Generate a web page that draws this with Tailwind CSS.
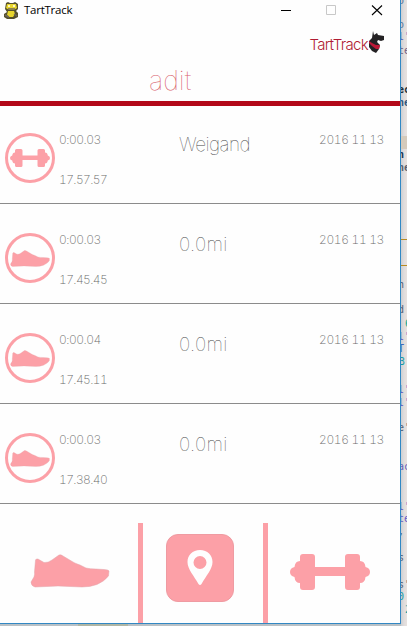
<!DOCTYPE html>
<html lang="en">
<head>
<meta charset="utf-8">
<title>TartTrack</title>
<script src="https://cdn.jsdelivr.net/npm/@tailwindcss/browser@4"></script>
</head>
<body class="relative h-[626px] w-[407px] overflow-hidden bg-[#e2dedd]">
<svg width="0" height="0" class="absolute">
  <defs>
    <symbol id="shoe" viewBox="0 0 80 34">
      <path d="M5.500 6Q6 4.500 8 5L14 8.500Q18 9 22 6L29 1Q31 .3 33 2L43 8Q45 9 46 9.500L50 11L56 14Q60 15 66 15L74 15.500Q78 15.500 79 17L78.500 22Q74 27.500 67 30.500Q60 33 52 33L28 32L5 33Q1 32 1 28L4 23Q5 20 4.500 18Z" fill="#fca0a7" stroke="#e3a5ab" stroke-width=".5"/>
    </symbol>
    <symbol id="dumbbell" viewBox="0 0 80 36">
      <path d="M13 0H22Q25 0 25 3V13H55V3Q55 0 58 0H67Q70 0 70 3V7Q75 7 75.500 13Q80 14 80 18Q80 22 75.500 23Q75 29 70 29V33Q70 36 67 36H58Q55 36 55 33V22H25V33Q25 36 22 36H13Q10 36 10 33V29Q5 29 4.500 23Q0 22 0 18Q0 14 4.500 13Q5 7 10 7V3Q10 0 13 0Z" fill="#fca0a7"/>
    </symbol>
  </defs>
</svg>

<!-- Editor window behind the app -->
<div class="absolute left-[401px] top-0 h-[626px] w-[6px] overflow-hidden bg-linear-to-r from-[#cdcfd2] via-[#e0dcdc] to-[#e8e2df] font-['DejaVu_Sans_Mono',monospace] text-[10px] leading-[12px] text-[#546076]">
  <div class="absolute top-[136px] h-[13px] w-full bg-[#d5cabb]"></div>
  <div class="absolute top-[239px] h-px w-full bg-[#b98a20]"></div>
  <div class="absolute top-[265px] h-px w-full bg-[#b98a20]"></div>
  <span class="absolute -left-[3px] -top-[5px] text-[#5576a0]">o</span>
  <span class="absolute -left-[3px] top-[19px] text-[#5576a0]">o</span>
  <span class="absolute -left-[3px] top-[31px] text-[#5260c0]">l'</span>
  <span class="absolute -left-[3px] top-[45px] text-[#715c80]">te</span>
  <span class="absolute -left-[3px] top-[84px] font-bold text-[#253038]">ec</span>
  <span class="absolute -left-[3px] top-[97px] font-bold text-[#315780]">ne</span>
  <span class="absolute -left-[3px] top-[149px] font-bold text-[#173657]">n</span>
  <span class="absolute -left-[3px] top-[162px] font-bold text-[#596070]">ne</span>
  <span class="absolute -left-[3px] top-[279px]">h</span>
  <span class="absolute -left-[3px] top-[304px]">d</span>
  <span class="absolute left-[4px] top-[318px] text-[#15a78d]">6</span>
  <span class="absolute -left-[3px] top-[331px] text-[#6259c5]">l'</span>
  <span class="absolute -left-[3px] top-[343px] text-[#4168bd]">T</span>
  <span class="absolute -left-[2px] top-[356px] text-[#169ca5]">3</span>
  <span class="absolute -left-[3px] top-[384px] text-[#6259c5]">l'</span>
  <span class="absolute -left-[3px] top-[397px] text-[#6259c5]">l'</span>
  <span class="absolute -left-[3px] top-[422px]">e'</span>
  <span class="absolute -left-[3px] top-[461px] text-[#665fba]">ac</span>
  <span class="absolute -left-[3px] top-[501px] text-[#6259c5]">l'</span>
  <span class="absolute -left-[3px] top-[513px] text-[#6259c5]">te</span>
  <span class="absolute -left-[3px] top-[526px]">,</span>
  <span class="absolute -left-[3px] top-[552px]">s</span>
  <span class="absolute -left-[3px] top-[579px]">s'</span>
  <span class="absolute -left-[3px] top-[591px] text-[#169ca5]">0</span>
  <span class="absolute left-[4px] top-[604px] text-[#169ca5]">2</span>
</div>
<div class="absolute left-0 top-[624px] flex h-[2px] w-[401px] bg-[#b9c1c6]">
  <div class="ml-[78px] h-full w-[50px] bg-[#b0b6a4]"></div>
</div>

<!-- App window -->
<main class="relative flex h-[624px] w-[401px] flex-col border-b border-r border-[#3288c4] bg-[#fefefe] font-[Inter,sans-serif] font-extralight text-[#6c6c6c]">
  <div class="flex h-5 shrink-0 items-center pl-[4px] text-black">
    <svg width="15" height="18" viewBox="0 0 15 18" class="shrink-0">
      <path d="M2 2L4 1L6 2H9L11 1L14 3L14 8L12 10L14 12V16L10 18H3L0 16V13L3 11L1 8Z" fill="#55502d"/>
      <path d="M3 3L6 3H9L12 3L13 7L10 9H5L2 7ZM4 10H10L11 13L9 16H5L3 14Z" fill="#e8d62d"/>
      <path d="M4 4H6V6H4ZM9 4H11V6H9Z" fill="#fff7bd"/>
      <path d="M4 8H11M1 14L5 16M10 13L13 15" stroke="#6f685a" stroke-width="1.500"/>
    </svg>
    <span class="ml-[5px] font-['Open_Sans',sans-serif] text-[11.500px] font-normal leading-5 tracking-[-0.25px]">TartTrack</span>
    <svg width="106" height="20" viewBox="0 0 106 20" class="ml-auto mr-[15px] shrink-0" fill="none">
      <path d="M2 10.500H12" stroke="#000"/>
      <path d="M47.500 5.500H56.500V14.500H47.500Z" stroke="#c8c8c8"/>
      <path d="M93 5.500L103 15M103 5.500L93 15" stroke="#000" stroke-width="1.100"/>
    </svg>
  </div>
  <header class="h-[81px] shrink-0">
    <div class="flex h-[38px] items-start justify-end pr-[15px] pt-[11px]">
      <span class="mt-[4px] text-[15px] font-light leading-[20px] tracking-[-0.7px] text-[#b01c34]">TartTrack</span>
      <svg width="16" height="23" viewBox="0 0 16 23" class="ml-px">
        <path d="M4 0L5 4L8 2L9 4L15 5V9L12 10L9 9L8 11L11 14L10 18L7 22L3 20L0 16V10L3 7Z" fill="#242224"/>
        <path d="M0 10L3 12L7 14L11 14L10 18L7 18L3 15L0 12Z" fill="#bd1937"/>
      </svg>
    </div>
    <h1 class="ml-[149px] text-[27px] font-thin leading-[45px] text-[#d9606c]">adit</h1>
  </header>
  <div class="h-[5px] shrink-0 bg-[#b30819]"></div>

  <section class="-mt-[2px] shrink-0">
    <article class="flex h-[100px] border-b border-[#8b8b8b] pl-[5px] pr-4">
      <div class="mt-[29px] flex size-[50px] shrink-0 items-center justify-center rounded-full border-[3px] border-[#fca0a7]"><svg width="40" height="18"><use href="#dumbbell"/></svg></div>
      <div class="ml-[4px] w-[120px] pt-[26px] text-[12px] leading-[20px] tabular-nums"><p class="tracking-[-0.5px]">0:00.03</p><p class="mt-5 tracking-[-0.6px]">17.57.57</p></div>
      <h2 class="pt-[29px] text-[19px] font-thin leading-6 tracking-[-0.55px] text-[#444]">Weigand</h2>
      <time class="ml-auto pt-[26px] text-[12px] leading-[20px] tracking-[-0.35px] tabular-nums">2016 11 13</time>
    </article>
    <article class="flex h-[100px] border-b border-[#8b8b8b] pl-[5px] pr-4">
      <div class="mt-[29px] flex size-[50px] shrink-0 items-center justify-center rounded-full border-[3px] border-[#fca0a7]"><svg width="40" height="17"><use href="#shoe"/></svg></div>
      <div class="ml-[4px] w-[120px] pt-[26px] text-[12px] leading-[20px] tabular-nums"><p class="tracking-[-0.5px]">0:00.03</p><p class="mt-5 tracking-[-0.6px]">17.45.45</p></div>
      <h2 class="pt-[29px] text-[19px] font-thin leading-6 tracking-[0.3px] text-[#444]">0.0mi</h2>
      <time class="ml-auto pt-[26px] text-[12px] leading-[20px] tracking-[-0.35px] tabular-nums">2016 11 13</time>
    </article>
    <article class="flex h-[100px] border-b border-[#8b8b8b] pl-[5px] pr-4">
      <div class="mt-[29px] flex size-[50px] shrink-0 items-center justify-center rounded-full border-[3px] border-[#fca0a7]"><svg width="40" height="17"><use href="#shoe"/></svg></div>
      <div class="ml-[4px] w-[120px] pt-[26px] text-[12px] leading-[20px] tabular-nums"><p class="tracking-[-0.5px]">0:00.04</p><p class="mt-5 tracking-[-0.6px]">17.45.11</p></div>
      <h2 class="pt-[29px] text-[19px] font-thin leading-6 tracking-[0.3px] text-[#444]">0.0mi</h2>
      <time class="ml-auto pt-[26px] text-[12px] leading-[20px] tracking-[-0.35px] tabular-nums">2016 11 13</time>
    </article>
    <article class="flex h-[100px] border-b border-[#8b8b8b] pl-[5px] pr-4">
      <div class="mt-[29px] flex size-[50px] shrink-0 items-center justify-center rounded-full border-[3px] border-[#fca0a7]"><svg width="40" height="17"><use href="#shoe"/></svg></div>
      <div class="ml-[4px] w-[120px] pt-[26px] text-[12px] leading-[20px] tabular-nums"><p class="tracking-[-0.5px]">0:00.03</p><p class="mt-5 tracking-[-0.6px]">17.38.40</p></div>
      <h2 class="pt-[29px] text-[19px] font-thin leading-6 tracking-[0.3px] text-[#444]">0.0mi</h2>
      <time class="ml-auto pt-[26px] text-[12px] leading-[20px] tracking-[-0.35px] tabular-nums">2016 11 13</time>
    </article>
  </section>

  <nav class="mt-[19px] flex h-[100px] shrink-0">
    <div class="w-[138px] pl-[30px] pt-[31px]"><svg width="80" height="34"><use href="#shoe"/></svg></div>
    <div class="flex w-[130px] justify-center border-x-[5px] border-[#fca0a7] pt-[11px]">
      <div class="ml-[-6px] flex size-[68px] justify-center rounded-[12px] border border-[#ef9ba2] bg-[#fca0a7] pt-[15px]">
        <svg width="26" height="36" viewBox="0 0 26 36"><path fill-rule="evenodd" d="M13 0C5.500 0 .5 5 .5 12C.5 19 7 26 11.500 34Q13 36 14.500 34C19 26 25.500 19 25.500 12C25.500 5 20.500 0 13 0ZM13 6A6.500 6.500 0 1 1 13 19A6.500 6.500 0 1 1 13 6Z" fill="#fefefe"/></svg>
      </div>
    </div>
    <div class="pl-[22px] pt-[31px]"><svg width="80" height="36"><use href="#dumbbell"/></svg></div>
  </nav>
</main>
</body>
</html>
